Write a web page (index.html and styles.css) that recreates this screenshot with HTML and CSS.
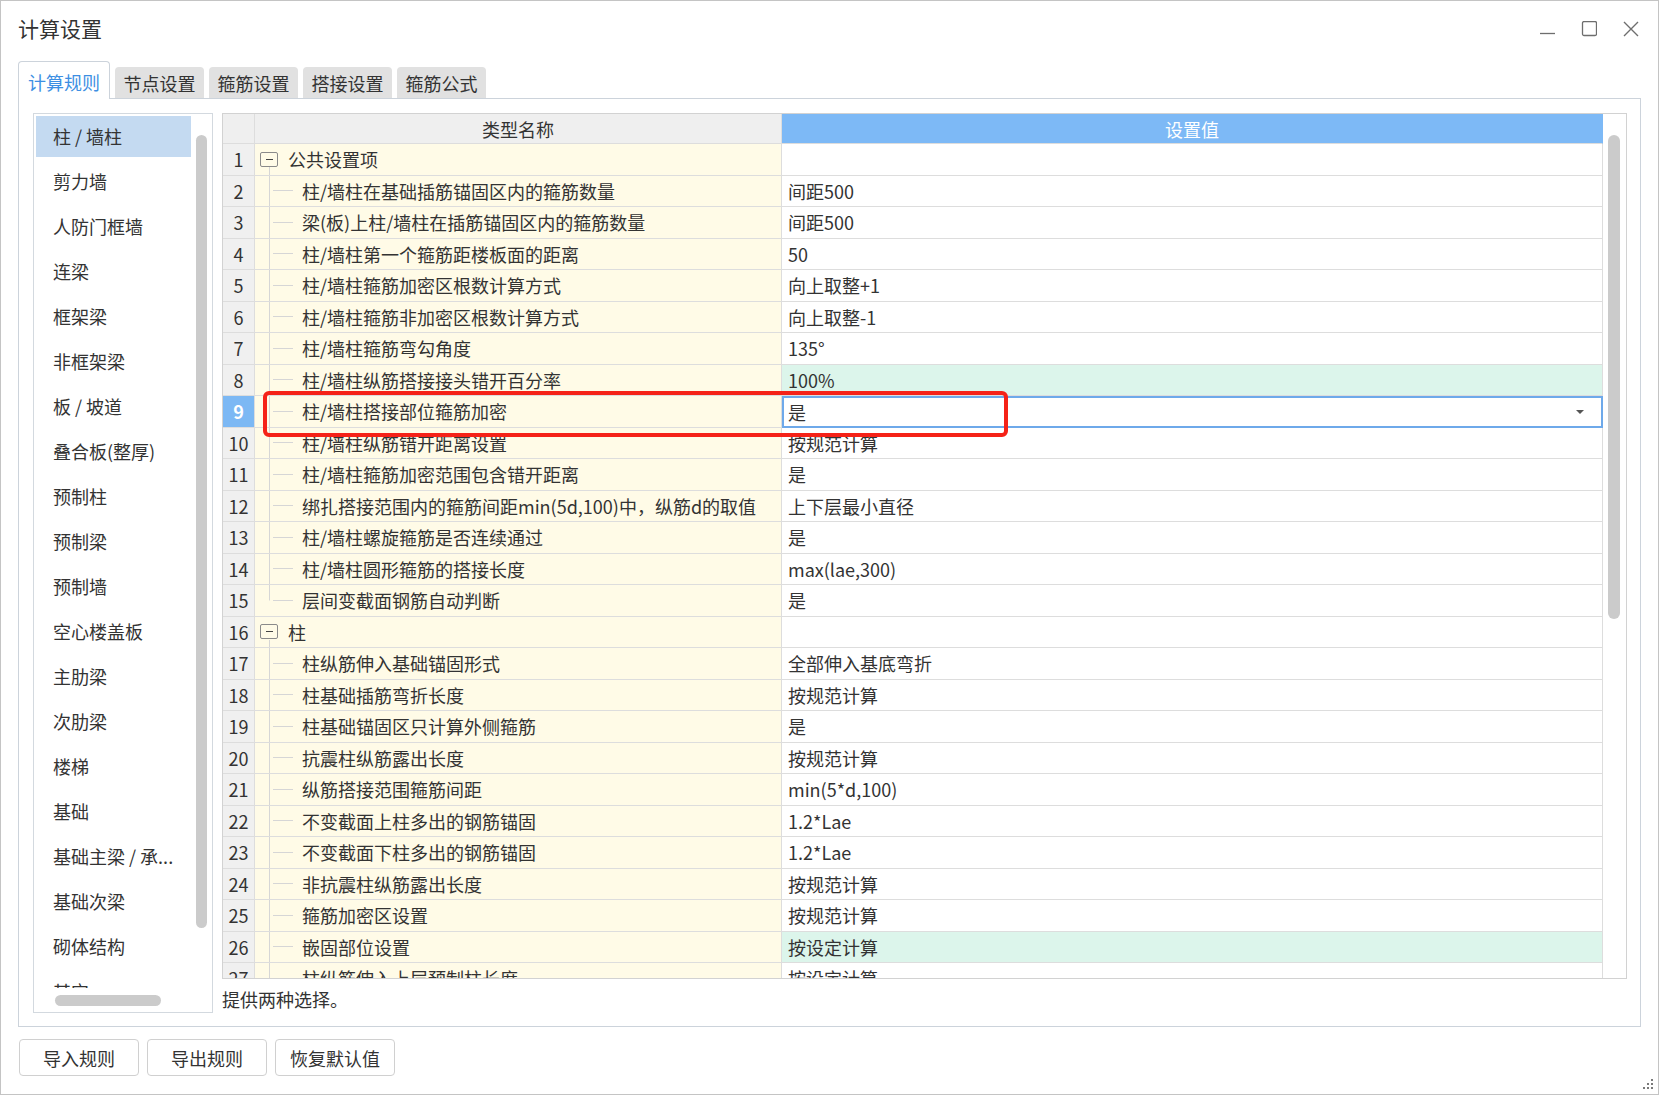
FILE: index.html
```html
<!DOCTYPE html>
<html lang="zh-CN">
<head>
<meta charset="utf-8">
<title>计算设置</title>
<link rel="stylesheet" href="styles.css">
</head>
<body>
<div class="window">
  <div class="titlebar">
    <div class="title">计算设置</div>
    <div class="controls">
      <svg viewBox="0 0 16 16"><line x1="1" y1="12.5" x2="16" y2="12.5" stroke="#6e6e6e" stroke-width="1.3"/></svg>
      <svg viewBox="0 0 16 16"><rect x="1.5" y="0.5" width="14" height="14" rx="1.5" fill="none" stroke="#6e6e6e" stroke-width="1.3"/></svg>
      <svg viewBox="0 0 16 16"><path d="M1 1 L15 15 M15 1 L1 15" stroke="#6e6e6e" stroke-width="1.4" fill="none"/></svg>
    </div>
  </div>

  <div class="tabs">
    <div class="tab active">计算规则</div>
    <div class="tab">节点设置</div>
    <div class="tab">箍筋设置</div>
    <div class="tab">搭接设置</div>
    <div class="tab">箍筋公式</div>
  </div>

  <div class="panel">
    <div class="list">
      <div class="items">
        <div class="item selected">柱 / 墙柱</div>
        <div class="item">剪力墙</div>
        <div class="item">人防门框墙</div>
        <div class="item">连梁</div>
        <div class="item">框架梁</div>
        <div class="item">非框架梁</div>
        <div class="item">板 / 坡道</div>
        <div class="item">叠合板(整厚)</div>
        <div class="item">预制柱</div>
        <div class="item">预制梁</div>
        <div class="item">预制墙</div>
        <div class="item">空心楼盖板</div>
        <div class="item">主肋梁</div>
        <div class="item">次肋梁</div>
        <div class="item">楼梯</div>
        <div class="item">基础</div>
        <div class="item">基础主梁 / 承...</div>
        <div class="item">基础次梁</div>
        <div class="item">砌体结构</div>
        <div class="item">其它</div>
      </div>
      <div class="vtrack"><div class="vthumb"></div></div>
      <div class="htrack"><div class="hthumb"></div></div>
    </div>

    <div class="main">
      <div class="table">
        <div class="grid">
          <div class="row head">
            <div class="cell num"></div>
            <div class="cell name">类型名称</div>
            <div class="cell val">设置值</div>
          </div>
          <div class="rows">
            <div class="row group">
              <div class="cell num">1</div>
              <div class="cell name"><span class="toggle"><i></i></span>公共设置项</div>
              <div class="cell val"></div>
            </div>
            <div class="row child">
              <div class="cell num">2</div>
              <div class="cell name"><span class="branch"></span>柱/墙柱在基础插筋锚固区内的箍筋数量</div>
              <div class="cell val">间距500</div>
            </div>
            <div class="row child">
              <div class="cell num">3</div>
              <div class="cell name"><span class="branch"></span>梁(板)上柱/墙柱在插筋锚固区内的箍筋数量</div>
              <div class="cell val">间距500</div>
            </div>
            <div class="row child">
              <div class="cell num">4</div>
              <div class="cell name"><span class="branch"></span>柱/墙柱第一个箍筋距楼板面的距离</div>
              <div class="cell val">50</div>
            </div>
            <div class="row child">
              <div class="cell num">5</div>
              <div class="cell name"><span class="branch"></span>柱/墙柱箍筋加密区根数计算方式</div>
              <div class="cell val">向上取整+1</div>
            </div>
            <div class="row child">
              <div class="cell num">6</div>
              <div class="cell name"><span class="branch"></span>柱/墙柱箍筋非加密区根数计算方式</div>
              <div class="cell val">向上取整-1</div>
            </div>
            <div class="row child">
              <div class="cell num">7</div>
              <div class="cell name"><span class="branch"></span>柱/墙柱箍筋弯勾角度</div>
              <div class="cell val">135°</div>
            </div>
            <div class="row child changed">
              <div class="cell num">8</div>
              <div class="cell name"><span class="branch"></span>柱/墙柱纵筋搭接接头错开百分率</div>
              <div class="cell val">100%</div>
            </div>
            <div class="row child current">
              <div class="cell num">9</div>
              <div class="cell name"><span class="branch"></span>柱/墙柱搭接部位箍筋加密</div>
              <div class="cell val">是<span class="caret"></span></div>
            </div>
            <div class="row child">
              <div class="cell num">10</div>
              <div class="cell name"><span class="branch"></span>柱/墙柱纵筋错开距离设置</div>
              <div class="cell val">按规范计算</div>
            </div>
            <div class="row child">
              <div class="cell num">11</div>
              <div class="cell name"><span class="branch"></span>柱/墙柱箍筋加密范围包含错开距离</div>
              <div class="cell val">是</div>
            </div>
            <div class="row child">
              <div class="cell num">12</div>
              <div class="cell name"><span class="branch"></span>绑扎搭接范围内的箍筋间距min(5d,100)中，纵筋d的取值</div>
              <div class="cell val">上下层最小直径</div>
            </div>
            <div class="row child">
              <div class="cell num">13</div>
              <div class="cell name"><span class="branch"></span>柱/墙柱螺旋箍筋是否连续通过</div>
              <div class="cell val">是</div>
            </div>
            <div class="row child">
              <div class="cell num">14</div>
              <div class="cell name"><span class="branch"></span>柱/墙柱圆形箍筋的搭接长度</div>
              <div class="cell val">max(lae,300)</div>
            </div>
            <div class="row child last">
              <div class="cell num">15</div>
              <div class="cell name"><span class="branch"></span>层间变截面钢筋自动判断</div>
              <div class="cell val">是</div>
            </div>
            <div class="row group">
              <div class="cell num">16</div>
              <div class="cell name"><span class="toggle"><i></i></span>柱</div>
              <div class="cell val"></div>
            </div>
            <div class="row child">
              <div class="cell num">17</div>
              <div class="cell name"><span class="branch"></span>柱纵筋伸入基础锚固形式</div>
              <div class="cell val">全部伸入基底弯折</div>
            </div>
            <div class="row child">
              <div class="cell num">18</div>
              <div class="cell name"><span class="branch"></span>柱基础插筋弯折长度</div>
              <div class="cell val">按规范计算</div>
            </div>
            <div class="row child">
              <div class="cell num">19</div>
              <div class="cell name"><span class="branch"></span>柱基础锚固区只计算外侧箍筋</div>
              <div class="cell val">是</div>
            </div>
            <div class="row child">
              <div class="cell num">20</div>
              <div class="cell name"><span class="branch"></span>抗震柱纵筋露出长度</div>
              <div class="cell val">按规范计算</div>
            </div>
            <div class="row child">
              <div class="cell num">21</div>
              <div class="cell name"><span class="branch"></span>纵筋搭接范围箍筋间距</div>
              <div class="cell val">min(5*d,100)</div>
            </div>
            <div class="row child">
              <div class="cell num">22</div>
              <div class="cell name"><span class="branch"></span>不变截面上柱多出的钢筋锚固</div>
              <div class="cell val">1.2*Lae</div>
            </div>
            <div class="row child">
              <div class="cell num">23</div>
              <div class="cell name"><span class="branch"></span>不变截面下柱多出的钢筋锚固</div>
              <div class="cell val">1.2*Lae</div>
            </div>
            <div class="row child">
              <div class="cell num">24</div>
              <div class="cell name"><span class="branch"></span>非抗震柱纵筋露出长度</div>
              <div class="cell val">按规范计算</div>
            </div>
            <div class="row child">
              <div class="cell num">25</div>
              <div class="cell name"><span class="branch"></span>箍筋加密区设置</div>
              <div class="cell val">按规范计算</div>
            </div>
            <div class="row child changed">
              <div class="cell num">26</div>
              <div class="cell name"><span class="branch"></span>嵌固部位设置</div>
              <div class="cell val">按设定计算</div>
            </div>
            <div class="row child">
              <div class="cell num">27</div>
              <div class="cell name"><span class="branch"></span>柱纵筋伸入上层预制柱长度</div>
              <div class="cell val">按设定计算</div>
            </div>
          </div>
        </div>
        <div class="vscroll"><div class="thumb"></div></div>
      </div>
      <div class="status">提供两种选择。</div>
    </div>
  </div>

  <div class="footer">
    <button class="btn">导入规则</button>
    <button class="btn">导出规则</button>
    <button class="btn">恢复默认值</button>
  </div>

  <div class="highlight-mark"></div>

  <svg class="grip" viewBox="0 0 12 12">
    <rect x="9" y="1" width="2" height="2" fill="#7a7a7a"/>
    <rect x="5" y="5" width="2" height="2" fill="#7a7a7a"/>
    <rect x="9" y="5" width="2" height="2" fill="#7a7a7a"/>
    <rect x="1" y="9" width="2" height="2" fill="#7a7a7a"/>
    <rect x="5" y="9" width="2" height="2" fill="#7a7a7a"/>
    <rect x="9" y="9" width="2" height="2" fill="#7a7a7a"/>
  </svg>
</div>
</body>
</html>
```

FILE: styles.css
```css
* { box-sizing: border-box; }
html, body { margin: 0; padding: 0; }
body {
  width: 1659px;
  height: 1095px;
  overflow: hidden;
  background: #fff;
  font-family: "Noto Sans CJK SC", "Noto Sans", sans-serif;
  font-size: 18px;
  color: #333;
}

.window {
  position: relative;
  width: 1659px;
  height: 1095px;
  border: 1px solid #c4c4c4;
  background: #fff;
  display: flex;
  flex-direction: column;
}

/* title bar */
.titlebar {
  height: 60px;
  flex: none;
  display: flex;
  align-items: center;
  padding-left: 17px;
  padding-right: 19px;
  padding-bottom: 6px;
}
.title { font-size: 21px; color: #333; line-height: 1; }
.controls {
  margin-left: auto;
  display: flex;
  gap: 26px;
  align-items: center;
  margin-top: 2px;
}
.controls svg { width: 16px; height: 16px; display: block; }

/* tabs */
.tabs {
  height: 37px;
  flex: none;
  display: flex;
  align-items: flex-end;
  gap: 5px;
  padding-left: 17px;
}
.tab {
  width: 89px;
  height: 31px;
  background: #e1e1e1;
  border-radius: 4px 4px 0 0;
  display: flex;
  align-items: center;
  justify-content: center;
  font-size: 18px;
  color: #333;
  line-height: 1;
}
.tab.active {
  width: 92px;
  height: 38px;
  margin-bottom: -1px;
  background: #fff;
  border: 1px solid #ccd3db;
  border-bottom: none;
  color: #3d8fe3;
  position: relative;
  z-index: 1;
  padding-top: 2px;
}

/* panel */
.panel {
  flex: none;
  height: 929px;
  margin: 0 17px;
  border: 1px solid #ccd3db;
  padding: 14px 13px 13px 14px;
  display: flex;
  gap: 9px;
}

/* left list */
.list {
  width: 180px;
  height: 900px;
  flex: none;
  border: 1px solid #d3d9df;
  display: grid;
  grid-template-columns: 160px 1fr;
  grid-template-rows: 1fr 24px;
}
.items {
  overflow: hidden;
  padding: 2px 0 0 2px;
}
.item {
  width: 155px;
  height: 41px;
  margin-bottom: 4px;
  padding-left: 17px;
  line-height: 41px;
  font-size: 18px;
  color: #333;
  white-space: nowrap;
}
.item.selected { background: #c4daf1; }
.vtrack { padding: 21px 0 0 2px; }
.vthumb {
  width: 11px;
  height: 793px;
  border-radius: 6px;
  background: #cbcbcb;
}
.htrack {
  grid-column: 1 / 3;
  padding: 7px 0 0 21px;
}
.hthumb {
  width: 106px;
  height: 11px;
  border-radius: 6px;
  background: #cbcbcb;
}

/* right side */
.main {
  flex: 1;
  display: flex;
  flex-direction: column;
  min-width: 0;
}
.table {
  height: 866px;
  flex: none;
  border: 1px solid #d2d2d2;
  display: flex;
  overflow: hidden;
}
.grid {
  width: 1380px;
  flex: none;
  display: flex;
  flex-direction: column;
  overflow: hidden;
}
.rows { overflow: hidden; flex: 1; }
.row {
  display: grid;
  grid-template-columns: 32px 527px 821px;
  height: 31.5px;
}
.cell {
  border-right: 1px solid #dddddd;
  border-bottom: 1px solid #dddddd;
  display: flex;
  align-items: center;
  white-space: nowrap;
  overflow: hidden;
  font-size: 18px;
  line-height: 1;
}
.num {
  background: #f0f0f0;
  justify-content: center;
  color: #333;
}
.name { background: #fffbe7; }
.val { background: #fff; padding-left: 6px; }

.row.head { height: 30px; }
.head .name { justify-content: center; background: #efefef; }
.head .num { background: #efefef; }
.head .val {
  justify-content: center;
  background: #7db9f6;
  color: #fff;
  padding-left: 0;
  border-right-color: #7db9f6;
}

.group .name {
  padding-left: 5px;
  background:
    linear-gradient(#d6d6d6, #d6d6d6) no-repeat 14px 23px / 1px 9px,
    #fffbe7;
}
.toggle {
  width: 18px;
  height: 15px;
  border: 1px solid #8a8a8a;
  border-radius: 2px;
  margin-right: 10px;
  display: flex;
  align-items: center;
  justify-content: center;
  background: #fffbe7;
  flex: none;
}
.toggle i {
  display: block;
  width: 7px;
  height: 1px;
  background: #444;
}

.child .name { padding-left: 14px; }
.branch {
  width: 33px;
  flex: none;
  align-self: stretch;
  background:
    linear-gradient(#d6d6d6, #d6d6d6) no-repeat 0 0 / 1px 100%,
    linear-gradient(#d6d6d6, #d6d6d6) no-repeat 4px 50% / 20px 1px;
}
.last .branch {
  background:
    linear-gradient(#d6d6d6, #d6d6d6) no-repeat 0 0 / 1px 50%,
    linear-gradient(#d6d6d6, #d6d6d6) no-repeat 4px 50% / 20px 1px;
}

.changed .val { background: #dcf5eb; }

.current .num {
  background: #7cb8f4;
  color: #fff;
  font-weight: bold;
}
.current .val {
  border: 2px solid #6ea9ea;
  padding-left: 4px;
}
.caret {
  margin-left: auto;
  margin-right: 17px;
  width: 0;
  height: 0;
  border-left: 4px solid transparent;
  border-right: 4px solid transparent;
  border-top: 4px solid #555;
}

.vscroll {
  flex: 1;
  padding: 21px 0 0 5px;
  background: #fff;
}
.vscroll .thumb {
  width: 12px;
  height: 484px;
  border-radius: 6px;
  background: #cbcbcb;
}

.status {
  flex: 1;
  display: flex;
  align-items: center;
  padding-top: 5px;
  font-size: 18px;
  color: #333;
}

/* footer buttons */
.footer {
  flex: none;
  display: flex;
  gap: 8px;
  padding: 12px 0 0 18px;
}
.btn {
  width: 120px;
  height: 37px;
  border: 1px solid #d0d0d0;
  border-radius: 4px;
  background: #fff;
  font-family: "Noto Sans CJK SC", sans-serif;
  font-size: 18px;
  color: #333;
  padding: 0;
}

/* annotation overlay */
.highlight-mark {
  position: absolute;
  left: 262px;
  top: 390px;
  width: 745px;
  height: 46px;
  border: 4px solid #f52218;
  border-radius: 6px;
  pointer-events: none;
}

.grip {
  position: absolute;
  right: 4px;
  bottom: 4px;
  width: 12px;
  height: 12px;
}
```
